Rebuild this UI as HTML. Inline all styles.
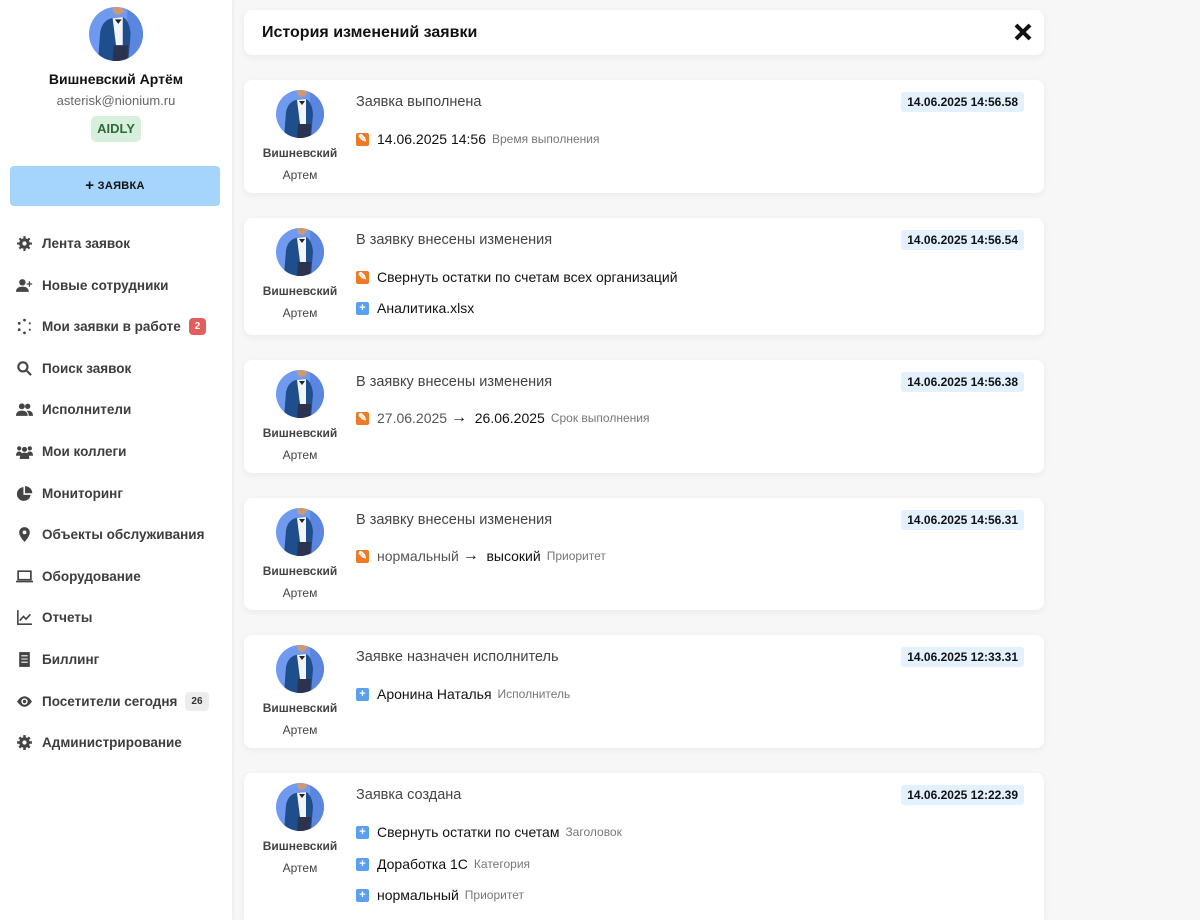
<!DOCTYPE html>
<html style="width:1200px;height:920px;overflow:hidden"><head><meta charset="utf-8"><style>
*{box-sizing:border-box;margin:0;padding:0}
body{width:1200px;height:920px;overflow:hidden;background:#f7f7f7;font-family:"Liberation Sans",sans-serif;color:#222;position:relative}
.sb{position:absolute;left:0;top:0;width:232px;height:920px;background:#fff;box-shadow:1px 0 4px rgba(0,0,0,.06)}
.av{position:absolute;border-radius:50%;overflow:hidden}
.nm{position:absolute;left:0;width:232px;text-align:center}
.btn{position:absolute;left:10px;top:166px;width:210px;height:40px;background:#a5d5fd;border-radius:4px;text-align:center;line-height:40px;font-size:11px;font-weight:700;color:#111;letter-spacing:.3px}
.mi{position:absolute;left:16px;height:20px;display:flex;align-items:center;font-size:13.5px;color:#3d3d3d;font-weight:600}
.mi svg{width:17px;height:17px;margin-right:9px;fill:#444}
.bd{font-size:10px;font-weight:700;border-radius:4px;padding:3px 6px;margin-left:8px}
.hdr{position:absolute;left:244px;top:10px;width:800px;height:45px;background:#fff;border-radius:8px;box-shadow:0 2px 8px rgba(0,0,0,.06)}
.card{position:absolute;left:244px;width:800px;background:#fff;border-radius:8px;box-shadow:0 2px 8px rgba(0,0,0,.06)}
.card .av{left:32px;top:10px;width:48px;height:48px}
.un{position:absolute;left:0;width:112px;text-align:center;font-size:12px;color:#444}
.tt{position:absolute;left:112px;top:14px;font-size:14.5px;color:#444;font-weight:500}
.ts{position:absolute;right:20px;top:12px;background:#e3f0fd;border-radius:3px;font-size:12px;font-weight:700;padding:3px 6px;color:#111}
.it{position:absolute;left:112px;display:flex;align-items:center;font-size:14px;color:#111}
.ic{width:13px;height:13px;border-radius:2px;margin-right:8px;display:inline-flex;align-items:center;justify-content:center;color:#fff;font-size:11px;font-weight:700;line-height:1}
.ed{background:#ef7a25}.ad{background:#5aa0ef}
.lb{font-size:12px;color:#777;margin-left:6px}
.old{color:#555}
</style></head><body>
<svg width="0" height="0" style="position:absolute"><defs>
<symbol id="ava" viewBox="0 0 48 48"><rect width="48" height="48" fill="#6f9af0"/><rect x="34" y="0" width="14" height="48" fill="#5a86e0"/><path d="M8 48 L10 22 Q12 12 20 10 L30 9 Q36 12 37 24 L35 48Z" fill="#1f4e8c"/><path d="M21 10 L30 9 L30 34 L24 34Z" fill="#f2f4fa"/><path d="M23 11 L29 11 L26 15Z" fill="#222"/><path d="M22 34 L35 34 L34 48 L21 48Z" fill="#2b3350"/><circle cx="26" cy="2" r="5" fill="#c89a7a"/></symbol>
</defs></svg>

<div class="sb">
<div class="av" style="left:89px;top:7px;width:54px;height:54px"><svg width="54" height="54"><use href="#ava"/></svg></div>
<div class="nm" style="top:71px;font-size:14px;font-weight:700;color:#111">Вишневский Артём</div>
<div class="nm" style="top:93px;font-size:13px;color:#666">asterisk@nionium.ru</div>
<div style="position:absolute;left:91px;top:116px;width:50px;height:26px;background:#d7efdc;border-radius:5px;text-align:center;line-height:26px;font-size:13px;font-weight:600;color:#2f6b39">AIDLY</div>
<div class="btn"><span style="font-size:15px;vertical-align:-1px">+</span> ЗАЯВКА</div>

<div class="mi" style="top:233px"><svg viewBox="0 0 16 16"><circle cx="8" cy="8" r="5"/><circle cx="8" cy="8" r="2" fill="#fff"/><path d="M7 1h2v3H7zM7 12h2v3H7zM1 7h3v2H1zM12 7h3v2h-3zM2.5 3.9l1.4-1.4 2 2-1.4 1.4zM10.1 11.5l1.4-1.4 2 2-1.4 1.4zM2.5 12.1l2-2 1.4 1.4-2 2zM10.1 4.5l2-2 1.4 1.4-2 2z"/></svg>Лента заявок</div>
<div class="mi" style="top:275px"><svg viewBox="0 0 16 16"><circle cx="6" cy="5" r="3"/><path d="M0 14q0-5 6-5t6 5z"/><path d="M12 4h1.2v2h2v1.2h-2v2H12v-2h-2V6h2z"/></svg>Новые сотрудники</div>
<div class="mi" style="top:316px"><svg viewBox="0 0 16 16"><circle cx="8" cy="2" r="1.3"/><circle cx="13" cy="5" r="1"/><circle cx="13" cy="11" r="1"/><circle cx="8" cy="14" r="1.3"/><circle cx="3" cy="11" r="1.3"/><circle cx="3" cy="5" r="1.3"/></svg>Мои заявки в работе<span class="bd" style="background:#e35d5d;color:#fff">2</span></div>
<div class="mi" style="top:358px"><svg viewBox="0 0 16 16"><circle cx="6.5" cy="6.5" r="4.3" fill="none" stroke="#444" stroke-width="2"/><path d="M9.5 10.9l1.4-1.4 4 4-1.4 1.4z"/></svg>Поиск заявок</div>
<div class="mi" style="top:399px"><svg viewBox="0 0 16 16"><circle cx="5.5" cy="5" r="2.8"/><circle cx="11" cy="5" r="2.5"/><path d="M0 14q0-5 5.5-5t5.5 5zM11 9q5 0 5 5h-4q0-3-2-4.6z"/></svg>Исполнители</div>
<div class="mi" style="top:441px"><svg viewBox="0 0 16 16"><circle cx="3" cy="5" r="2"/><circle cx="13" cy="5" r="2"/><circle cx="8" cy="6" r="2.4"/><path d="M0 12q0-4 3-4t3 4zM10 12q0-4 3-4t3 4zM3.5 15q0-6 4.5-6t4.5 6z"/></svg>Мои коллеги</div>
<div class="mi" style="top:483px"><svg viewBox="0 0 16 16"><path d="M7 2a6.5 6.5 0 1 0 6.8 7.3H7z"/><path d="M8.5 1v6.8h6.8A6.8 6.8 0 0 0 8.5 1z"/></svg>Мониторинг</div>
<div class="mi" style="top:524px"><svg viewBox="0 0 16 16"><path d="M8 1a5 5 0 0 0-5 5c0 4 5 9 5 9s5-5 5-9a5 5 0 0 0-5-5z"/><circle cx="8" cy="6" r="1.8" fill="#fff"/></svg>Объекты обслуживания</div>
<div class="mi" style="top:566px"><svg viewBox="0 0 16 16"><path d="M2 3h12v8H2z" fill="none" stroke="#444" stroke-width="1.6"/><path d="M0 12h16v1.5H0z"/></svg>Оборудование</div>
<div class="mi" style="top:607px"><svg viewBox="0 0 16 16"><path d="M1 1h1.5v12.5H15V15H1z"/><path d="M3.5 11l3.5-4 2.5 2.5 4-4.5" fill="none" stroke="#444" stroke-width="1.5"/></svg>Отчеты</div>
<div class="mi" style="top:649px"><svg viewBox="0 0 16 16"><path d="M3 1h10v14H3z"/><path d="M5 4h6v1H5zM5 7h6v1H5zM5 10h6v1H5z" fill="#fff"/></svg>Биллинг</div>
<div class="mi" style="top:691px"><svg viewBox="0 0 16 16"><path d="M8 3C4 3 1 8 1 8s3 5 7 5 7-5 7-5-3-5-7-5z"/><circle cx="8" cy="8" r="3" fill="#fff"/><circle cx="8" cy="8" r="1.6"/></svg>Посетители сегодня<span class="bd" style="background:#ececec;color:#333;padding:4px 6px">26</span></div>
<div class="mi" style="top:732px"><svg viewBox="0 0 16 16"><circle cx="8" cy="8" r="5"/><circle cx="8" cy="8" r="2" fill="#fff"/><path d="M6.8 1h2.4v3H6.8zM6.8 12h2.4v3H6.8zM1 6.8h3v2.4H1zM12 6.8h3v2.4h-3zM2.3 4l1.7-1.7 2.1 2.1-1.7 1.7zM9.9 11.6l1.7-1.7 2.1 2.1-1.7 1.7zM2.3 12l2.1-2.1 1.7 1.7L4 13.7zM9.9 4.4L12 2.3 13.7 4l-2.1 2.1z"/></svg>Администрирование</div>
</div>

<div class="hdr"><div style="position:absolute;left:18px;top:14px;font-size:16px;font-weight:700;color:#111">История изменений заявки</div>
<svg style="position:absolute;right:12px;top:13px" width="18" height="18" viewBox="0 0 18 18"><path d="M2 2L16 16M16 2L2 16" stroke="#111" stroke-width="4"/></svg></div>

<div class="card" style="top:80px;height:113px"><div class="av"><svg width="48" height="48"><use href="#ava"/></svg></div><div class="un" style="top:66px;font-weight:700">Вишневский</div><div class="un" style="top:88px">Артем</div>
<div class="tt">Заявка выполнена</div><div class="ts">14.06.2025 14:56.58</div>
<div class="it" style="top:51px"><span class="ic ed">✎</span>14.06.2025 14:56<span class="lb">Время выполнения</span></div></div>

<div class="card" style="top:218px;height:117px"><div class="av"><svg width="48" height="48"><use href="#ava"/></svg></div><div class="un" style="top:66px;font-weight:700">Вишневский</div><div class="un" style="top:88px">Артем</div>
<div class="tt">В заявку внесены изменения</div><div class="ts">14.06.2025 14:56.54</div>
<div class="it" style="top:51px"><span class="ic ed">✎</span>Свернуть остатки по счетам всех организаций</div>
<div class="it" style="top:82px"><span class="ic ad">+</span>Аналитика.xlsx</div></div>

<div class="card" style="top:360px;height:113px"><div class="av"><svg width="48" height="48"><use href="#ava"/></svg></div><div class="un" style="top:66px;font-weight:700">Вишневский</div><div class="un" style="top:88px">Артем</div>
<div class="tt">В заявку внесены изменения</div><div class="ts">14.06.2025 14:56.38</div>
<div class="it" style="top:49px"><span class="ic ed">✎</span><span class="old">27.06.2025</span>&nbsp;<b style="font-size:16px">→</b>&nbsp;&nbsp;26.06.2025<span class="lb">Срок выполнения</span></div></div>

<div class="card" style="top:498px;height:112px"><div class="av"><svg width="48" height="48"><use href="#ava"/></svg></div><div class="un" style="top:66px;font-weight:700">Вишневский</div><div class="un" style="top:88px">Артем</div>
<div class="tt">В заявку внесены изменения</div><div class="ts">14.06.2025 14:56.31</div>
<div class="it" style="top:49px"><span class="ic ed">✎</span><span class="old">нормальный</span>&nbsp;<b style="font-size:16px">→</b>&nbsp;&nbsp;высокий<span class="lb">Приоритет</span></div></div>

<div class="card" style="top:635px;height:113px"><div class="av"><svg width="48" height="48"><use href="#ava"/></svg></div><div class="un" style="top:66px;font-weight:700">Вишневский</div><div class="un" style="top:88px">Артем</div>
<div class="tt">Заявке назначен исполнитель</div><div class="ts">14.06.2025 12:33.31</div>
<div class="it" style="top:51px"><span class="ic ad">+</span>Аронина Наталья<span class="lb">Исполнитель</span></div></div>

<div class="card" style="top:773px;height:147px;border-radius:8px 8px 0 0"><div class="av"><svg width="48" height="48"><use href="#ava"/></svg></div><div class="un" style="top:66px;font-weight:700">Вишневский</div><div class="un" style="top:88px">Артем</div>
<div class="tt">Заявка создана</div><div class="ts">14.06.2025 12:22.39</div>
<div class="it" style="top:51px"><span class="ic ad">+</span>Свернуть остатки по счетам<span class="lb">Заголовок</span></div>
<div class="it" style="top:83px"><span class="ic ad">+</span>Доработка 1С<span class="lb">Категория</span></div>
<div class="it" style="top:114px"><span class="ic ad">+</span>нормальный<span class="lb">Приоритет</span></div></div>
</body></html>
